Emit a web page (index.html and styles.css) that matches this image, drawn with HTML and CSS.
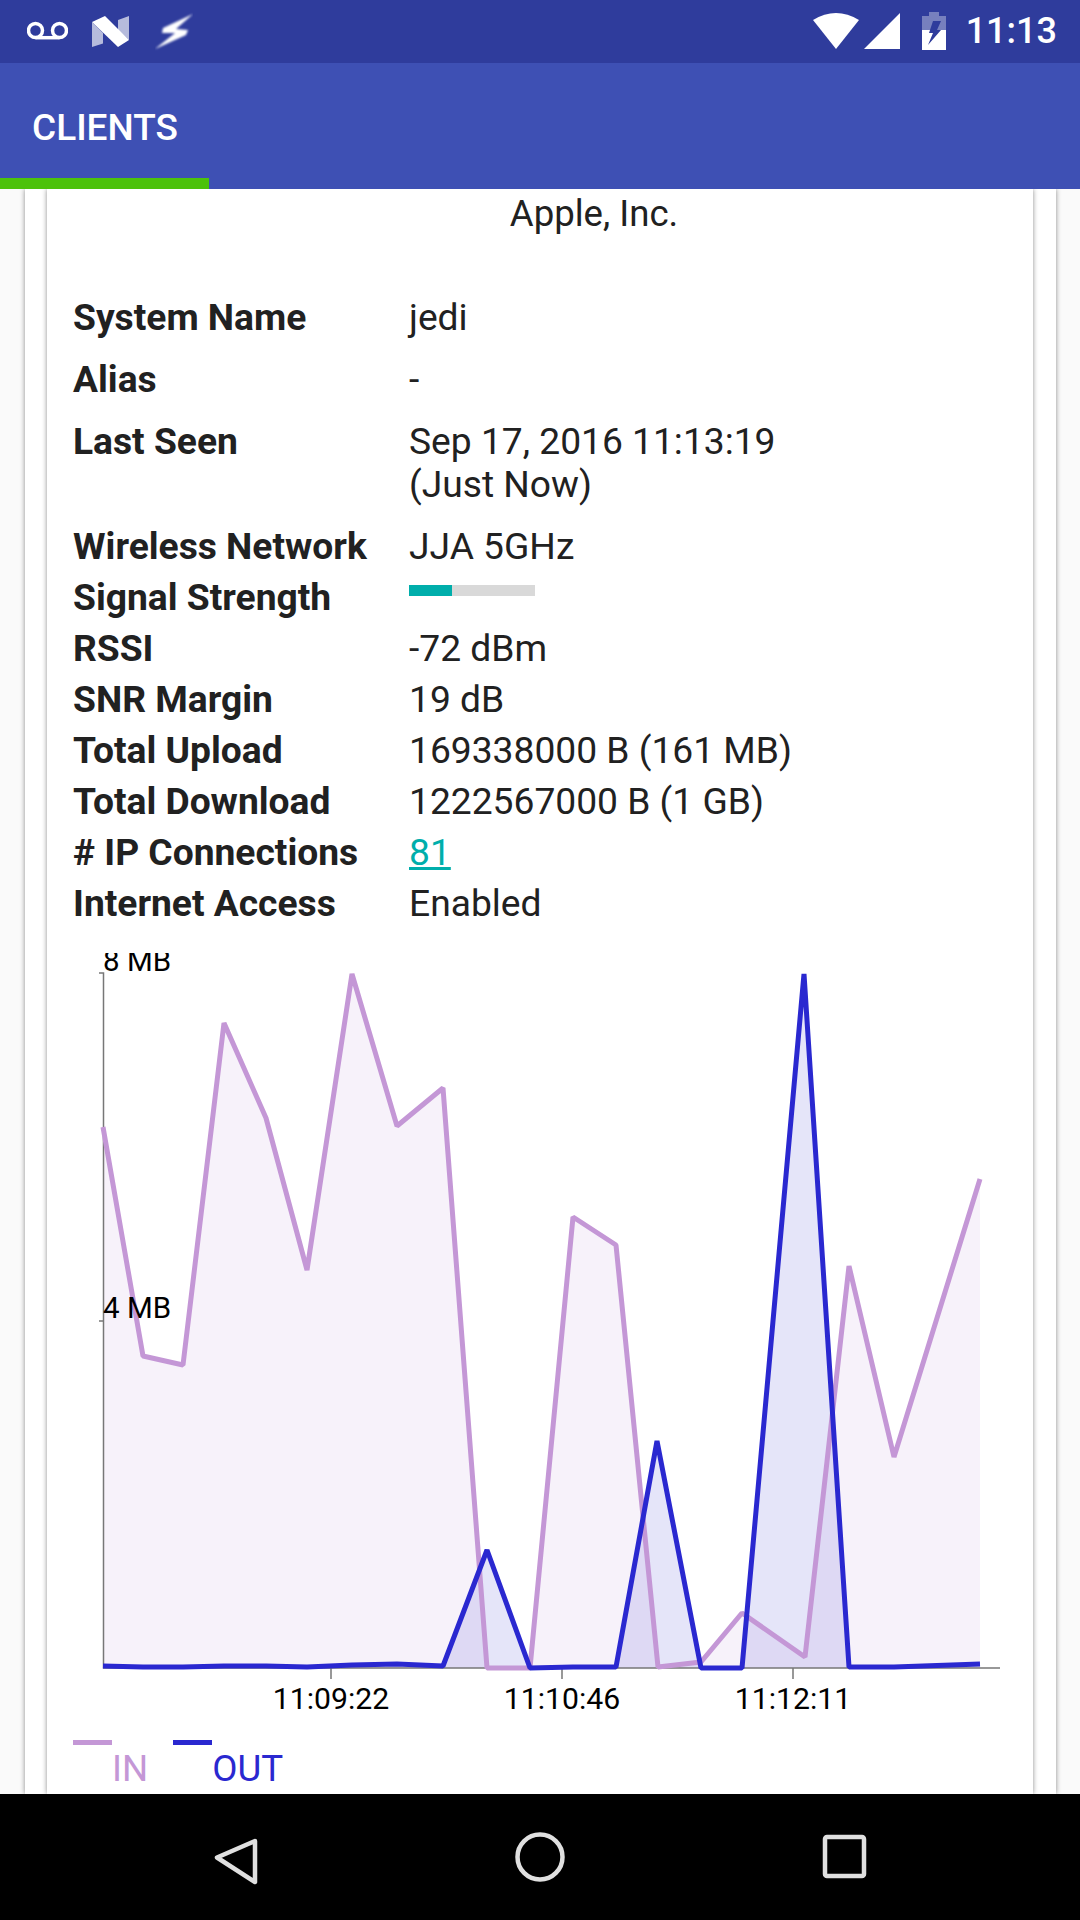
FILE: index.html
```html
<!DOCTYPE html>
<html lang="en">
<head>
<meta charset="utf-8">
<title>Clients</title>
<link rel="stylesheet" href="styles.css">
</head>
<body>
<div class="phone">
  <header class="status">
    <div class="status-group">
      <svg class="ic ic-vm" viewBox="27 0 41 63"><circle cx="35.5" cy="30.5" r="7" fill="none" stroke="#fff" stroke-width="3.5"/><circle cx="59.5" cy="30.5" r="7" fill="none" stroke="#fff" stroke-width="3.5"/><path d="M35.5 37.7H59.5" stroke="#fff" stroke-width="3.5"/></svg>
      <svg class="ic ic-n" viewBox="92 0 38 63"><path d="M92 22L103 33V43.5L92 47Z" fill="#fff" opacity=".65"/><path d="M118 20L129 16V40L118 30Z" fill="#fff" opacity=".65"/><path d="M92 22L105 16L129 40L118 47Z" fill="#fff"/></svg>
      <svg class="ic ic-flash" viewBox="155 0 38 63"><defs><filter id="soft" x="-20%" y="-20%" width="140%" height="140%"><feGaussianBlur stdDeviation="1"/></filter></defs><path d="M193 14L163 28L162 33L175 33L155 49L186 35L188 30L176 29Z" fill="#fff" filter="url(#soft)"/></svg>
    </div>
    <div class="status-group">
      <svg class="ic ic-wifi" viewBox="813 0 46 63"><path d="M836 49L813 20Q836 6 859 20Z" fill="#fff"/></svg>
      <svg class="ic ic-signal" viewBox="864 0 36 63"><path d="M864 49L900 13V49Z" fill="#fff"/></svg>
      <svg class="ic ic-batt" viewBox="922 0 24 63"><path d="M929 12H939V16H946V30H922V16H929Z" fill="#fff" opacity=".35"/><path d="M922 30H946V50H922Z" fill="#fff"/><path d="M933 21H941L937 30H941L928 45L933 33H929Z" fill="#2f3c9c"/></svg>
      <span class="clock">11:13</span>
    </div>
  </header>
  <nav class="toolbar">
    <span class="tab-title">CLIENTS</span>
    <span class="tab-line"></span>
  </nav>
  <main class="content">
    <div class="sheet">
      <section class="card">
        <p class="vendor">Apple, Inc.</p>
        <div class="facts facts-wide">
          <b>System Name</b><span>jedi</span>
          <b>Alias</b><span>-</span>
          <b>Last Seen</b><span>Sep 17, 2016 11:13:19<br>(Just Now)</span>
        </div>
        <div class="facts facts-tight">
          <b>Wireless Network</b><span>JJA 5GHz</span>
          <b>Signal Strength</b><span><span class="meter"><span class="meter-fill"></span></span></span>
          <b>RSSI</b><span>-72 dBm</span>
          <b>SNR Margin</b><span>19 dB</span>
          <b>Total Upload</b><span>169338000 B (161 MB)</span>
          <b>Total Download</b><span>1222567000 B (1 GB)</span>
          <b># IP Connections</b><span><a class="link" href="#">81</a></span>
          <b>Internet Access</b><span>Enabled</span>
        </div>
        <svg class="chart" viewBox="47 953 986 772">
          <path class="area-in" d="M103 1668V1127L143 1356L183 1365L224 1023L266 1118L307 1270L352 974L397 1126L443 1088L487 1668L530 1668L573 1217L616 1245L658 1667L701 1662L742 1613L805 1657L849 1266L894 1457L980 1179V1668Z"/>
          <path class="area-out" d="M103 1668V1666L143 1667L183 1667L224 1666L266 1666L307 1667L352 1665L397 1664L443 1666L487 1550L530 1668L573 1667L616 1667L657 1441L701 1668L742 1668L804 974L849 1667L894 1667L980 1664V1668Z"/>
          <path class="axis" d="M99 973H103.500V1668H1000M99 1321H103.500M331 1668V1679M562 1668V1679M793 1668V1679"/>
          <path class="line-in" d="M103 1127L143 1356L183 1365L224 1023L266 1118L307 1270L352 974L397 1126L443 1088L487 1668L530 1668L573 1217L616 1245L658 1667L701 1662L742 1613L805 1657L849 1266L894 1457L980 1179"/>
          <path class="line-out" d="M103 1666L143 1667L183 1667L224 1666L266 1666L307 1667L352 1665L397 1664L443 1666L487 1550L530 1668L573 1667L616 1667L657 1441L701 1668L742 1668L804 974L849 1667L894 1667L980 1664"/>
          <text class="tick" x="103" y="971">8 MB</text>
          <text class="tick" x="103" y="1318">4 MB</text>
          <text class="tick tick-x" x="331" y="1709">11:09:22</text>
          <text class="tick tick-x" x="562" y="1709">11:10:46</text>
          <text class="tick tick-x" x="793" y="1709">11:12:11</text>
        </svg>
        <div class="legend">
          <div class="legend-item legend-in"><i class="swatch"></i><span>IN</span></div>
          <div class="legend-item legend-out"><i class="swatch"></i><span>OUT</span></div>
        </div>
      </section>
    </div>
  </main>
  <footer class="navbar">
    <svg class="nav-ic" viewBox="0 0 1080 126"><path d="M255 47L217 63.500L255 88Z" fill="none" stroke="#e0e0e0" stroke-width="4.500" stroke-linejoin="round"/><circle cx="540" cy="63" r="22.500" fill="none" stroke="#e0e0e0" stroke-width="4.500"/><rect x="825" y="43" width="39" height="39" rx="2" fill="none" stroke="#e0e0e0" stroke-width="4.500"/></svg>
  </footer>
</div>
</body>
</html>
```
FILE: styles.css
```css
* { box-sizing: border-box; }
html, body { margin: 0; padding: 0; }
body { width: 1080px; height: 1920px; overflow: hidden; font-family: Roboto, "Noto Sans", sans-serif; color: #212121; }
.phone { width: 1080px; height: 1920px; display: flex; flex-direction: column; }

.status { height: 63px; flex: none; background: #2f3c9c; display: flex; justify-content: space-between; padding: 0 23px 0 27px; }
.status-group { display: flex; align-items: center; }
.ic { display: block; height: 63px; flex: none; }
.ic-vm { width: 41px; margin-right: 24px; }
.ic-n { width: 38px; margin-right: 25px; }
.ic-flash { width: 38px; }
.ic-wifi { width: 46px; margin-right: 5px; }
.ic-signal { width: 36px; margin-right: 22px; }
.ic-batt { width: 24px; margin-right: 20px; }
.clock { color: #fff; font-size: 36px; font-weight: 500; line-height: 63px; }

.toolbar { height: 126px; flex: none; background: #3e50b4; display: flex; flex-direction: column; justify-content: space-between; }
.tab-title { color: #fff; font-size: 37px; font-weight: 500; line-height: 43px; padding: 43px 0 0 32px; }
.tab-line { display: block; width: 209px; height: 11px; background: #4cc20a; }

.content { flex: 1; min-height: 0; overflow: hidden; background: #fafafa; padding-left: 25px; }
.sheet { width: 1031px; height: 100%; background: #fff; padding-left: 22px; box-shadow: 0 0 5px rgba(0,0,0,.45); }
.card { width: 986px; height: 100%; background: #fff; box-shadow: 0 0 5px rgba(0,0,0,.45); padding-top: 3px; }

.vendor { margin: 0 0 0 108px; text-align: center; font-size: 36.600px; line-height: 43px; }
.facts { display: grid; grid-template-columns: 336px 1fr; padding-left: 26px; font-size: 37.200px; line-height: 43px; }
.facts b { font-weight: 700; }
.facts-wide { margin-top: 61px; row-gap: 19px; }
.facts-tight { margin-top: 19px; row-gap: 8px; }
.meter { display: block; width: 126px; height: 11px; margin: 9px 0 0 0; background: #d9d9d9; }
.meter-fill { display: block; width: 43px; height: 100%; background: #00aeab; }
.link { color: #00aeab; text-decoration: underline; }

.chart { display: block; width: 986px; height: 772px; margin-top: 28px; overflow: hidden; }
.area-in { fill: #c497d6; fill-opacity: .13; }
.area-out { fill: #2a28d0; fill-opacity: .12; }
.axis { fill: none; stroke: #777; stroke-width: 1.500; }
.line-in { fill: none; stroke: #c497d6; stroke-width: 5; stroke-linejoin: bevel; }
.line-out { fill: none; stroke: #2a28d0; stroke-width: 5; stroke-linejoin: bevel; }
.tick { font-family: Roboto, sans-serif; font-size: 29.500px; fill: #000; }
.tick-x { text-anchor: middle; font-size: 30.200px; }

.legend { display: flex; gap: 25px; padding-left: 26px; margin-top: 15px; }
.legend-item { display: flex; align-items: flex-start; font-size: 36.700px; line-height: 43px; }
.swatch { display: block; width: 39px; height: 5px; background: currentColor; }
.legend-item span { padding-top: 7px; }
.legend-in { color: #c497d6; }
.legend-out { color: #2a28d0; }

.navbar { height: 126px; flex: none; background: #000; }
.nav-ic { display: block; width: 1080px; height: 126px; }
```
